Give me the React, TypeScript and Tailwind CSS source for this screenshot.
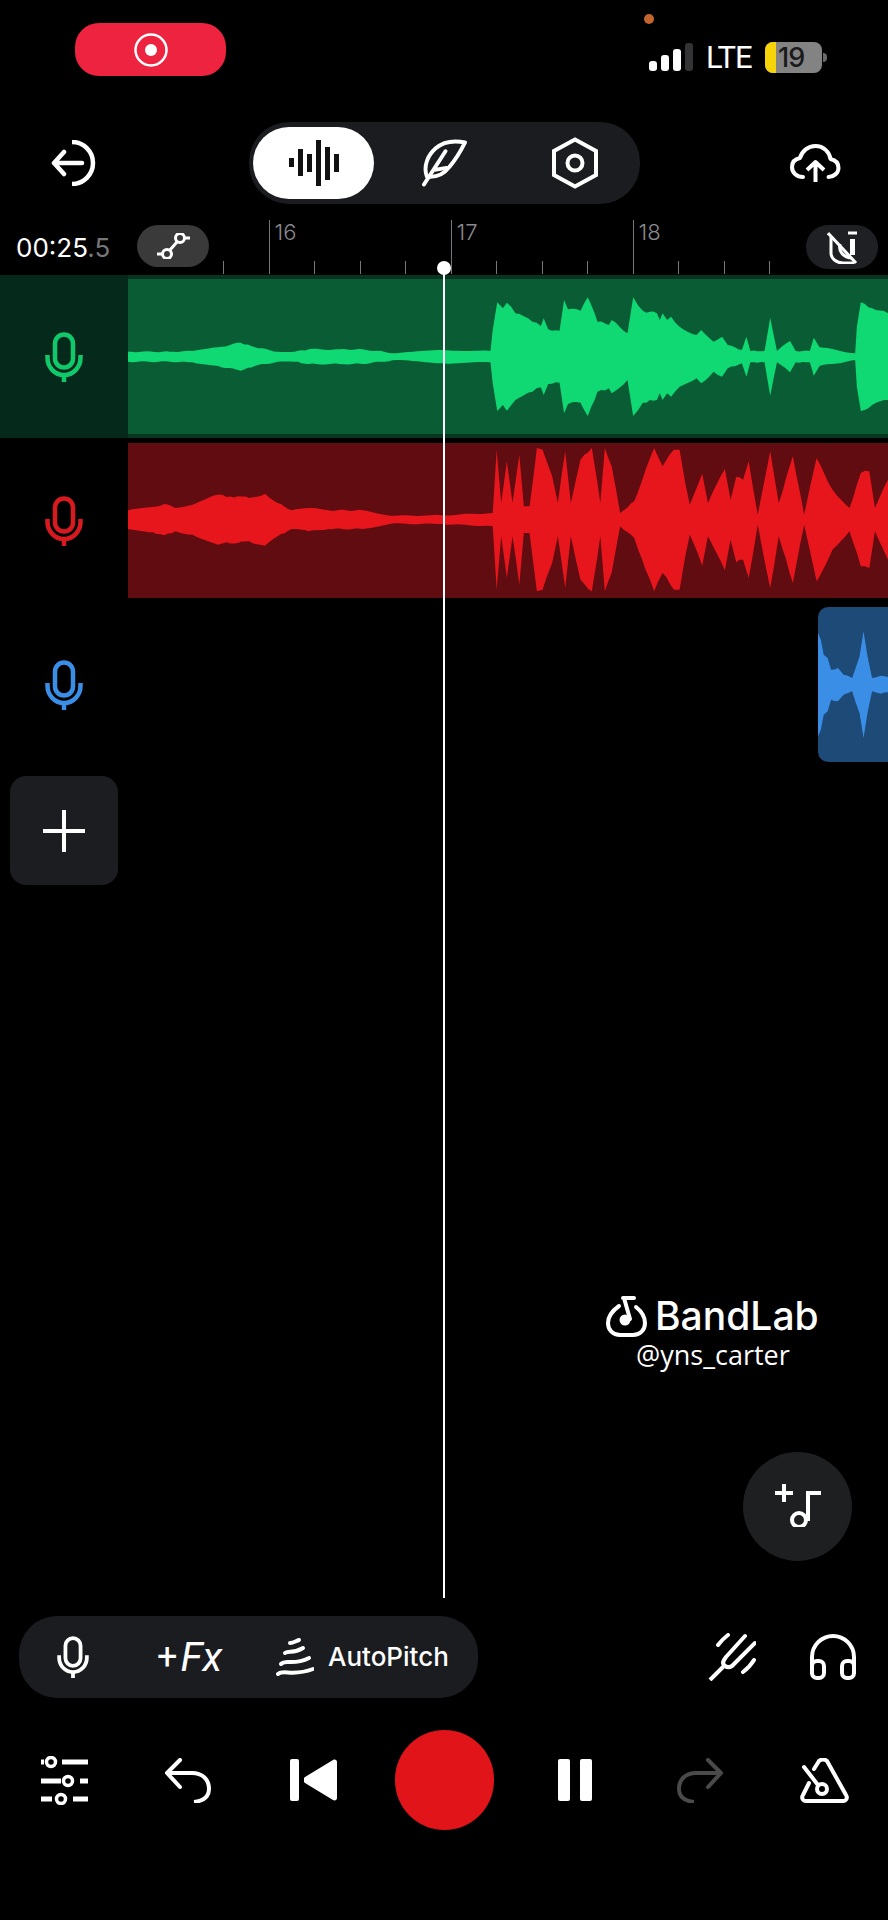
import type { ReactNode } from "react";

type Pt = [number, number];

const greenTop: Pt[] = [[226,245],[300,245],[340,243],[385,232],[425,218],[450,232],[490,245],[520,245],[545,238],[600,238],[640,238],[700,250],[780,240],[866,243],[870,180],[878,97],[888,115],[895,98],[910,130],[940,155],[955,168],[960,145],[968,178],[988,182],[996,90],[1003,118],[1025,122],[1038,82],[1050,130],[1055,155],[1075,165],[1080,150],[1108,190],[1118,82],[1135,122],[1160,130],[1165,150],[1170,130],[1178,150],[1185,140],[1200,170],[1230,195],[1238,180],[1260,215],[1275,200],[1285,225],[1310,240],[1318,200],[1325,243],[1350,243],[1360,143],[1372,243],[1395,213],[1405,243],[1430,243],[1437,203],[1447,232],[1510,250],[1513,170],[1520,97],[1540,115],[1568,130]];
const redTop: Pt[] = [[226,722],[270,712],[290,703],[310,715],[340,705],[385,675],[400,682],[420,680],[440,685],[468,672],[490,700],[515,722],[545,715],[580,722],[640,722],[690,738],[780,737],[870,730],[877,540],[885,700],[895,575],[905,700],[917,555],[925,710],[935,710],[948,535],[958,540],[975,620],[985,700],[998,545],[1008,700],[1025,570],[1045,535],[1055,640],[1060,700],[1068,535],[1080,590],[1095,730],[1120,695],[1140,600],[1155,535],[1170,590],[1190,540],[1200,540],[1210,640],[1218,705],[1240,612],[1250,700],[1280,598],[1290,690],[1300,622],[1312,630],[1322,575],[1338,735],[1360,545],[1375,700],[1400,560],[1420,735],[1442,565],[1470,660],[1500,715],[1520,610],[1535,605],[1545,715],[1568,630]];
const blueTop: Pt[] = [[1445,130],[1450,150],[1455,195],[1462,205],[1468,240],[1480,235],[1490,255],[1505,265],[1518,200],[1525,125],[1532,200],[1540,265],[1555,258],[1568,262]];

// adds the fine grain of a real waveform between the traced points
function roughen(top: Pt[], mid: number, seed: number) {
  const out: string[] = [];
  for (let i = 0; i < top.length - 1; i++) {
    const [x1, y1] = top[i];
    const [x2, y2] = top[i + 1];
    const steps = Math.max(1, Math.round((x2 - x1) / 7));
    for (let s = 0; s < steps; s++) {
      const x = x1 + ((x2 - x1) * s) / steps;
      const amp = Math.abs(mid - (y1 + ((y2 - y1) * s) / steps));
      const grain = s === 0 ? 0 : Math.sin(x * 1.7 + seed) * Math.min(4, 1 + amp * 0.03);
      out.push(`${x.toFixed(1)},${(amp + grain).toFixed(1)}`);
    }
  }
  const last = top[top.length - 1];
  out.push(`${last[0]},${Math.abs(mid - last[1])}`);
  return out.map((p) => p.split(",").map(Number));
}

function wavePath(top: Pt[], mid: number) {
  const upper = roughen(top, mid, 0).map(([x, a]) => `${x},${mid - a}`);
  const lower = roughen(top, mid, 2).reverse().map(([x, a]) => `${x},${mid + a}`);
  return `M${upper.join(" L")} L${lower.join(" L")} Z`;
}

function Wave({ top, mid, color, x0, clipTop, className }: { top: Pt[]; mid: number; color: string; x0: number; clipTop: number; className: string }) {
  const width = 1568 - x0;
  return (
    <svg viewBox={`${x0} ${clipTop} ${width} 465`} preserveAspectRatio="none" className={className}>
      <path d={wavePath(top, mid)} fill={color} />
    </svg>
  );
}

function Mic({ color, className }: { color: string; className: string }) {
  return (
    <svg viewBox="0 0 38 50" fill="none" stroke={color} strokeWidth="4.500" className={className}>
      <rect x="10" y="2.500" width="18" height="33" rx="9" />
      <path d="M2.500 23v3c0 9 7 17 16.500 17s16.500-8 16.500-17v-3" />
      <path d="M19 43v7" />
    </svg>
  );
}

function Track({ top, mid, clipTop, color, clip, wave, strip, header }: { top: Pt[]; mid: number; clipTop: number; color: string; clip: string; wave: string; strip: string; header: string }) {
  return (
    <div className={`flex h-[163px] mb-px ${strip}`}>
      <div className={`w-[128px] flex items-center justify-center ${header}`}>
        <Mic color={color} className="w-[38px] h-[50px]" />
      </div>
      <div className={`flex-1 mt-[4px] h-[155px] ${clip}`}>
        <Wave top={top} mid={mid} clipTop={clipTop} x0={226} color={wave} className="w-full h-full" />
      </div>
    </div>
  );
}

function Tick({ major, label }: { major?: boolean; label?: string }) {
  return (
    <div className="w-[45.5px] h-full flex flex-col justify-end pb-px">
      {major ? (
        <div className="h-[54px] border-l border-[#77777a] pl-[5px] text-[22px] leading-[24px] text-[#8a8a8e] font-['Inter',sans-serif] font-light">
          {label}
        </div>
      ) : (
        <div className="h-[13px] border-l border-[#77777a]" />
      )}
    </div>
  );
}

function Tool({ className, children }: { className: string; children: ReactNode }) {
  return <div className={`flex items-center justify-center shrink-0 ${className}`}>{children}</div>;
}

const line = { fill: "none", stroke: "currentColor", strokeLinecap: "round", strokeLinejoin: "round" } as const;

export default function App() {
  const ticks: { major?: boolean; label?: string }[] = [
    {}, { major: true, label: "16" }, {}, {}, {},
    { major: true, label: "17" }, {}, {}, {},
    { major: true, label: "18" }, {}, {}, {},
  ];

  return (
    <div className="relative w-[888px] h-[1920px] bg-black overflow-hidden flex flex-col text-white font-['Inter',sans-serif]">
      {/* status bar */}
      <div className="h-[122px] flex items-start justify-between shrink-0">
        <div className="ml-[75px] mt-[23px] w-[151px] h-[53px] rounded-[24px] bg-[#ee2340] flex items-center justify-center">
          <svg viewBox="0 0 34 34" className="w-[34px] h-[34px]" fill="none">
            <circle cx="17" cy="17" r="15.500" stroke="white" strokeWidth="2.500" />
            <circle cx="17" cy="17" r="6" fill="white" />
          </svg>
        </div>
        <div className="mt-[14px] mr-[60px] w-[179px]">
          <div className="ml-[-5px] w-[10px] h-[10px] rounded-full bg-[#c2652f]" />
          <div className="mt-[18px] h-[31px] flex items-center">
            <div className="flex items-end gap-[4px] h-[28px] mt-[-2px]">
              <div className="w-[8px] h-[10px] rounded-[3px] bg-white" />
              <div className="w-[8px] h-[16px] rounded-[3px] bg-white" />
              <div className="w-[8px] h-[22px] rounded-[3px] bg-white" />
              <div className="w-[8px] h-[28px] rounded-[3px] bg-[#333335]" />
            </div>
            <span className="ml-[13px] w-[46px] text-[31px] leading-[30px] tracking-[-1px] font-['Roboto',sans-serif]">LTE</span>
            <div className="ml-[13px] w-[57px] h-[31px] rounded-[8px] overflow-hidden flex bg-[#838383]">
              <div className="w-[11px] bg-[#f7d40a]" />
              <span className="ml-[2px] text-[27px] leading-[31px] tracking-[-1px] font-medium text-[#1a1a1a]">19</span>
            </div>
            <div className="ml-[1px] w-[4px] h-[9px] rounded-r-full bg-[#6a6a6a]" />
          </div>
        </div>
      </div>

      {/* top toolbar */}
      <div className="h-[82px] flex items-center shrink-0">
        <Tool className="ml-[51px] w-[45px] h-[46px]">
          <svg viewBox="0 0 45 46" className="w-full h-full" {...line} strokeWidth="4.500">
            <path d="M31 23H3M13 12 3 23l10 11" />
            <path strokeLinecap="butt" d="M21 2a21 21 0 0 1 0 42" />
          </svg>
        </Tool>
        <div className="ml-[153px] w-[391px] h-[82px] rounded-[40px] bg-[#1b1c1f] flex items-center">
          <Tool className="ml-[4px] w-[121px] h-[72px] rounded-[36px] bg-white">
            <svg viewBox="0 0 50 46" className="w-[50px] h-[46px]" fill="#111">
              <rect x="0" y="18" width="5" height="9" />
              <rect x="9" y="9" width="5" height="27" />
              <rect x="18" y="14" width="5" height="18" />
              <rect x="27" y="0" width="5" height="46" />
              <rect x="36" y="7" width="5" height="33" />
              <rect x="45" y="14" width="5" height="18" />
            </svg>
          </Tool>
          <Tool className="ml-[48px] w-[45px] h-[48px]">
            <svg viewBox="0 0 46 48" className="w-full h-full" {...line} strokeWidth="4">
              <path d="M44 3C34 1 22 2 14 9 6 16 1 27 5 38c9 1 17-2 23-10 7-8 12-17 16-25Z" />
              <path d="M24 12 2 46M13 31l12-2" />
            </svg>
          </Tool>
          <Tool className="ml-[85px] w-[46px] h-[52px]">
            <svg viewBox="0 0 46 52" className="w-full h-full" fill="none" stroke="currentColor" strokeWidth="4" strokeLinejoin="miter">
              <path d="M23 2.500 44 14v24L23 49.500 2 38V14Z" />
              <circle cx="23" cy="26" r="7.500" />
            </svg>
          </Tool>
        </div>
        <Tool className="ml-[150px] w-[51px] h-[38px]">
          <svg viewBox="0 0 51 38" className="w-full h-full" {...line} strokeWidth="4">
            <path d="M13 33C7 33 2 29 2 23c0-5 3-8 8-9C12 7 18 2 25.500 2c8 0 14 6 15 13 5 1 8 4 8 9s-5 9-10 9" />
            <path strokeLinecap="butt" d="M25.500 38V19M17 26l8.500-8 8.500 8" />
          </svg>
        </Tool>
      </div>

      {/* ruler */}
      <div className="relative mt-[16px] h-[55px] flex shrink-0">
        <div className="ml-[16px] w-[94px] pt-[13px] text-[26px] leading-[30px] whitespace-nowrap">
          00:25<span className="text-[#77777a]">.5</span>
        </div>
        <Tool className="ml-[27px] mt-[5px] w-[72px] h-[42px] rounded-[21px] bg-[#3a3a3b]">
          <svg viewBox="0 0 33 26" className="w-[33px] h-[26px]" fill="none" stroke="white" strokeWidth="3">
            <circle cx="10" cy="21" r="4.500" />
            <circle cx="23" cy="5" r="4.500" />
            <path d="M0 21h5M13 17l7-8M28 5h5" />
          </svg>
        </Tool>
        <div className="ml-[14px] flex h-full">
          {ticks.map((t, i) => (
            <Tick key={i} major={t.major} label={t.label} />
          ))}
        </div>
        <Tool className="absolute left-[806px] top-[5px] w-[72px] h-[44px] rounded-[22px] bg-[#1f2023]">
          <svg viewBox="0 0 31 33" className="w-[31px] h-[33px]" fill="none" stroke="white" strokeWidth="3">
            <path d="M1 2 29 32" />
            <path d="M4 6v16c0 6 6 10 12 10h11" />
            <path d="M13 13c-2 8 4 13 11 14" />
            <path d="M21 2h9" />
            <path d="M25.500 8v16" strokeWidth="5" />
          </svg>
        </Tool>
      </div>

      {/* tracks */}
      <Track top={greenTop} mid={260} clipTop={27} color="#10c96b" clip="bg-[#0a5c35]" wave="#10d873" strip="bg-[#07351f]" header="bg-[#05291a]" />
      <Track top={redTop} mid={750} clipTop={520} color="#d8191f" clip="bg-[#600c10]" wave="#e6161c" strip="bg-black" header="bg-black" />
      <div className="flex h-[163px] mb-px">
        <div className="w-[128px] flex items-center justify-center">
          <Mic color="#3a8ee6" className="w-[38px] h-[50px]" />
        </div>
        <div className="ml-auto mt-[4px] w-[70px] h-[155px] rounded-l-[10px] overflow-hidden bg-[#1d4a77]">
          <Wave top={blueTop} mid={285} clipTop={52} x0={1445} color="#3a8ee6" className="w-full h-full" />
        </div>
      </div>

      <div className="ml-[10px] mt-[9px] w-[108px] h-[109px] rounded-[16px] bg-[#1c1d20] flex items-center justify-center shrink-0">
        <svg viewBox="0 0 42 42" className="w-[42px] h-[42px]" stroke="white" strokeWidth="4">
          <path d="M0 21h42M21 0v42" />
        </svg>
      </div>

      {/* bottom toolbar */}
      <div className="mt-[731px] h-[82px] flex items-center shrink-0">
        <div className="ml-[19px] w-[459px] h-[82px] rounded-[38px] bg-[#1b1c1f] flex items-center">
          <Mic color="white" className="ml-[38px] w-[32px] h-[42px]" />
          <div className="ml-[68px] w-[65px] flex items-center font-['Roboto',sans-serif] text-[41px] leading-[42px] italic whitespace-nowrap">
            <span className="not-italic text-[36px] mr-[3px]">+</span>Fx
          </div>
          <svg viewBox="0 0 38 40" className="ml-[54px] w-[38px] h-[40px]" {...line} strokeWidth="4">
            <path d="M14 6c3 0 6-2 9-3" />
            <path d="M9 16c4-3 8 1 18-5" />
            <path d="M5 27c5-5 12 2 28-6" />
            <path d="M2 37c6-5 14 3 35-5" />
          </svg>
          <span className="ml-[14px] text-[26px] leading-[30px] font-medium whitespace-nowrap">AutoPitch</span>
        </div>
        <svg viewBox="8 8 48 48" className="ml-[230px] w-[48px] h-[48px]" {...line} strokeWidth="4">
          <path strokeLinecap="butt" d="M10 55l15-15" />
          <path d="M45 11 26 32c-3 4-4 6-2 8 2 2 5 3 8 1l23-23" />
          <path d="M18 20c3-4 6-7 10-10M43 47c4-3 8-7 11-12" />
        </svg>
        <svg viewBox="0 0 46 46" className="ml-[54px] w-[46px] h-[46px]" fill="none" stroke="currentColor" strokeWidth="4">
          <path d="M2 40V23a21 21 0 0 1 42 0v17" />
          <rect x="2" y="27" width="12" height="17" rx="5" />
          <rect x="32" y="27" width="12" height="17" rx="5" />
        </svg>
      </div>

      {/* transport */}
      <div className="mt-[32px] h-[100px] flex items-center shrink-0">
        <svg viewBox="0 0 47 49" className="ml-[41px] w-[47px] h-[49px]" fill="none" stroke="currentColor" strokeWidth="5">
          <path d="M0 6h3M21 6h26M0 25h20M39 25h8M0 43h11M32 43h15" />
          <circle cx="10" cy="6" r="4.500" strokeWidth="3.500" />
          <circle cx="27" cy="25" r="4.500" strokeWidth="3.500" />
          <circle cx="20" cy="43" r="4.500" strokeWidth="3.500" />
        </svg>
        <svg viewBox="0 0 47 45" className="ml-[76px] w-[47px] h-[45px]" {...line} strokeWidth="4">
          <path d="M16 2 3 15l13 14" />
          <path d="M3 15h25c10 0 17 6 17 16 0 8-6 12-15 13" strokeLinecap="butt" />
        </svg>
        <div className="ml-[79px] w-[47px] h-[42px] flex items-center">
          <div className="w-[9px] h-[42px] rounded-[2px] bg-white" />
          <svg viewBox="0 0 33 42" className="ml-[5px] w-[33px] h-[42px]" fill="white">
            <path d="M1 18 29 1c2-1 4 0 4 2v36c0 2-2 3-4 2L1 24c-2-1-2-5 0-6Z" />
          </svg>
        </div>
        <div className="ml-[58px] w-[99px] h-[100px] rounded-full bg-[#e01419]" />
        <div className="ml-[64px] w-[34px] h-[42px] flex justify-between">
          <div className="w-[12px] h-full rounded-[2px] bg-white" />
          <div className="w-[12px] h-full rounded-[2px] bg-white" />
        </div>
        <svg viewBox="0 0 47 45" className="ml-[85px] w-[47px] h-[45px] -scale-x-100 text-[#4a4a4a]" {...line} strokeWidth="4">
          <path d="M16 2 3 15l13 14" />
          <path d="M3 15h25c10 0 17 6 17 16 0 8-6 12-15 13" strokeLinecap="butt" />
        </svg>
        <svg viewBox="0 0 49 45" className="ml-[76px] w-[49px] h-[45px]" {...line} strokeWidth="4">
          <path d="M14 11l5-8c2-2 6-2 8 0l19 34c2 3 0 6-3 6H6c-3 0-5-3-3-6l6-12" />
          <path d="M4 9l14 18" />
          <circle cx="22" cy="31" r="5" />
        </svg>
      </div>

      {/* playhead, lies over the tracks */}
      <div className="absolute left-[443px] top-[268px] w-[2px] h-[1330px] bg-white" />
      <div className="absolute left-[437px] top-[261px] w-[14px] h-[14px] rounded-full bg-white" />

      {/* watermark */}
      <div className="absolute left-[606px] top-[1295px] flex items-center">
        <svg viewBox="0 0 41 42" className="w-[41px] h-[42px]" {...line} strokeWidth="4">
          <path d="M13 11C6 16 2 22 2 28c0 7 5 12 12 12h13c7 0 12-5 12-12 0-6-4-12-9-16" />
          <path d="M17 3h11M18 3l6 21" />
          <circle cx="19" cy="25" r="5.500" fill="currentColor" stroke="none" />
        </svg>
        <span className="ml-[8px] text-[39px] leading-[42px] font-medium">BandLab</span>
      </div>
      <div className="absolute left-[636px] top-[1338px] text-[27px] leading-[34px] font-['Open_Sans',sans-serif] whitespace-nowrap">
        @yns_carter
      </div>

      <div className="absolute left-[743px] top-[1452px] w-[109px] h-[109px] rounded-full bg-[#1d1f21] flex items-center justify-center">
        <svg viewBox="0 0 46 43" className="w-[46px] h-[43px] mt-[-3px]" fill="none" stroke="white" strokeWidth="4">
          <path d="M0 9h18M9 0v18" />
          <path d="M46 9H33v28" />
          <circle cx="24" cy="36" r="7" />
        </svg>
      </div>
    </div>
  );
}
